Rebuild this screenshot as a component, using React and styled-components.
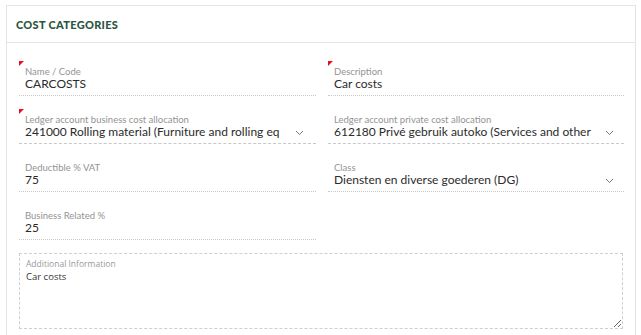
import React from 'react';
import styled, { createGlobalStyle } from 'styled-components';

const GlobalStyle = createGlobalStyle`
  html, body {
    margin: 0;
    padding: 0;
    background: #fff;
  }
  body {
    font-family: 'Lato', 'Noto Sans', sans-serif;
    color: #333;
  }
`;

const Page = styled.div`
  padding: 5px 5px 0 6px;
`;

const Card = styled.section`
  border: 1px solid #e4e4e4;
  border-bottom: none;
  background: #fff;
`;

const CardHeader = styled.header`
  height: 36px;
  display: flex;
  align-items: center;
  padding: 0 9px;
  border-bottom: 1px solid #e4e4e4;
`;

const Title = styled.h2`
  margin: 0;
  font-family: 'Lato', sans-serif;
  font-weight: 900;
  font-size: 11px;
  letter-spacing: 0.3px;
  color: #2c5540;
  text-transform: uppercase;
`;

const CardBody = styled.div`
  padding: 18px 12px 6px 12px;
`;

const Grid = styled.div`
  display: grid;
  grid-template-columns: 297px 296px;
  column-gap: 12px;
  row-gap: 13px;
`;

const Field = styled.div`
  position: relative;
  height: 35px;
  box-sizing: border-box;
  padding: 5px 0 0 6px;
  border-bottom: 1px ${p => (p.$line === 'dashed' ? 'dashed #c8c8c8' : 'dotted #c8c8c8')};
  display: flex;
  align-items: flex-start;
  justify-content: space-between;

  ${p =>
    p.$required &&
    `
    &::before {
      content: '';
      position: absolute;
      left: 0;
      top: 0;
      width: 0;
      height: 0;
      border-top: 5px solid #e8111b;
      border-right: 5px solid transparent;
    }
  `}
`;

const FieldMain = styled.div`
  min-width: 0;
  flex: 1;
`;

const Label = styled.div`
  font-size: 9.5px;
  line-height: 11px;
  color: #939393;
  white-space: nowrap;
`;

const Value = styled.div`
  font-size: 12px;
  line-height: 14px;
  color: #2b2b2b;
  white-space: nowrap;
`;

const Chevron = styled.svg`
  width: 9px;
  height: 6px;
  margin: 16px ${p => p.$right}px 0 8px;
  flex-shrink: 0;
`;

const Empty = styled.div``;

const NoteBox = styled.div`
  margin-top: 13px;
  height: 76px;
  box-sizing: border-box;
  border: 1px dashed #cfcfcf;
  padding: 4px 6px;
  resize: both;
  overflow: auto;
`;

const NoteLabel = styled.div`
  font-family: 'Open Sans', sans-serif;
  font-size: 8.5px;
  line-height: 12px;
  color: #9a9a9a;
`;

const NoteText = styled.div`
  font-family: 'Open Sans', sans-serif;
  font-size: 9.5px;
  line-height: 13px;
  color: #333;
`;

const ChevronIcon = ({ right }) => (
  <Chevron viewBox="0 0 9 6" $right={right}>
    <path d="M1 1 L4.5 4.5 L8 1" fill="none" stroke="#777" strokeWidth="1" />
  </Chevron>
);

const fields = [
  { label: 'Name / Code', value: 'CARCOSTS', required: true, line: 'dotted' },
  { label: 'Description', value: 'Car costs', required: true, line: 'dotted' },
  {
    label: 'Ledger account business cost allocation',
    value: '241000 Rolling material (Furniture and rolling eq',
    required: true,
    line: 'dashed',
    chevron: 12,
  },
  {
    label: 'Ledger account private cost allocation',
    value: '612180 Privé gebruik autoko (Services and other',
    required: false,
    line: 'dashed',
    chevron: 10,
  },
  { label: 'Deductible % VAT', value: '75', line: 'dotted' },
  { label: 'Class', value: 'Diensten en diverse goederen (DG)', line: 'dotted', chevron: 10 },
  { label: 'Business Related %', value: '25', line: 'dotted' },
  null,
];

const App = () => (
  <>
    <GlobalStyle />
    <Page>
      <Card>
        <CardHeader>
          <Title>Cost Categories</Title>
        </CardHeader>
        <CardBody>
          <Grid>
            {fields.map((f, i) =>
              f ? (
                <Field key={i} $required={f.required} $line={f.line}>
                  <FieldMain>
                    <Label>{f.label}</Label>
                    <Value>{f.value}</Value>
                  </FieldMain>
                  {f.chevron && <ChevronIcon right={f.chevron} />}
                </Field>
              ) : (
                <Empty key={i} />
              )
            )}
          </Grid>
          <NoteBox>
            <NoteLabel>Additional Information</NoteLabel>
            <NoteText>Car costs</NoteText>
          </NoteBox>
        </CardBody>
      </Card>
    </Page>
  </>
);

export default App;
